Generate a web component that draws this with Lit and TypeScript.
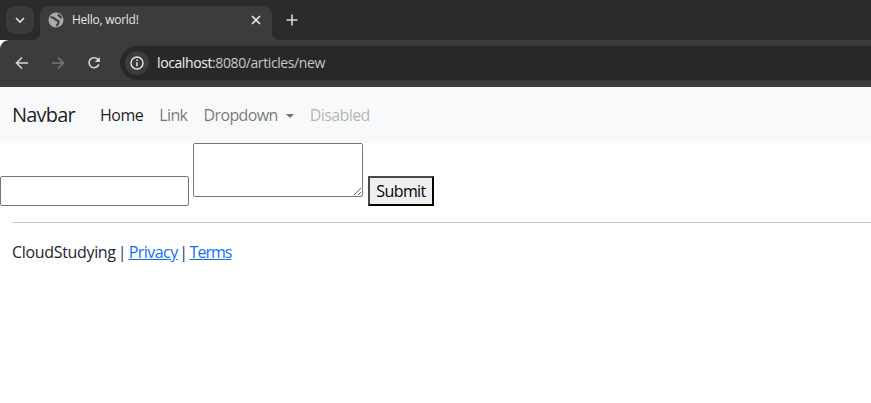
import { LitElement, html, css } from "lit";
import { customElement } from "lit/decorators.js";

@customElement("app-root")
export class AppRoot extends LitElement {
  static styles = css`
    :host { display: block; width: 871px; height: 403px; overflow: hidden; background: #fff; color: #212529;
      font-family: "Open Sans", "Noto Sans", sans-serif; font-size: 16px; line-height: 24px; }
    * { box-sizing: border-box; }
    svg { display: block; }
    .tabs { height: 40px; background: #2b2b2b; display: flex; align-items: flex-end; position: relative; }
    .tab-list { width: 28px; height: 28px; margin: 0 6px 6px 6px; border-radius: 9px; background: #3a3a3a; display: flex; align-items: center; justify-content: center; }
    .tab { width: 232px; height: 34px; background: #3c3c3c; border-radius: 9px 9px 0 0; display: flex; align-items: center; padding: 0 11px 6px 8px; color: #e6e6e6; font-size: 12px; position: relative; }
    .tab::before, .tab::after { content: ""; position: absolute; bottom: 0; width: 8px; height: 8px; }
    .tab::before { left: -8px; background: radial-gradient(circle at 0 0, #2b2b2b 8px, #3c3c3c 8.5px); }
    .tab::after { right: -8px; background: radial-gradient(circle at 100% 0, #2b2b2b 8px, #3c3c3c 8.5px); }
    .tab .title { flex: 1; margin-left: 8px; letter-spacing: -0.27px; }
    .plus { margin-left: 6px; margin-bottom: 6px; width: 28px; height: 28px; display: flex; align-items: center; justify-content: center; }
    .toolbar { height: 47px; background: #3c3c3c; border-radius: 9px 0 0 0; display: flex; align-items: center; padding: 0 0 1px 0; }
    .nav-btn { width: 20px; height: 20px; margin-left: 12px; margin-right: 4px; display: flex; align-items: center; justify-content: center; }
    .nav-btn + .nav-btn { margin-left: 12px; }
    .omni { margin-left: 12px; flex: 1; height: 34px; background: #282828; border-radius: 17px 0 0 17px; display: flex; align-items: center; padding-left: 5px; font-size: 14px; color: #c7c7c7; letter-spacing: -0.4px; }
    .info { width: 24px; height: 24px; border-radius: 50%; background: #3c3c3c; display: flex; align-items: center; justify-content: center; margin-right: 8px; }
    .host { color: #f0f0f0; }
    .navbar { height: 56px; background: #f8f9fa; display: flex; align-items: center; padding: 0 12px; }
    .brand { font-size: 20px; color: rgba(0,0,0,.9); margin-right: 16px; width: 64px; white-space: nowrap; letter-spacing: -0.8px; }
    .nav-link { padding: 0 8px; color: rgba(0,0,0,.55); white-space: nowrap; letter-spacing: -0.6px; }
    .nav-link.active { color: rgba(0,0,0,.9); letter-spacing: -0.5px; }
    .nav-link.disabled { color: rgba(0,0,0,.3); letter-spacing: -0.6px; }
    .caret { display: inline-block; margin-left: 8px; vertical-align: 3px; border-top: 4.8px solid; border-right: 4.8px solid transparent; border-left: 4.8px solid transparent; }
    form { display: flex; align-items: flex-end; height: 63px; }
    input { width: 189px; height: 30px; margin: 0; padding: 1px 2px; border: 1px solid #767676; border-radius: 2px; background: #fff; font: inherit; }
    textarea { width: 170px; height: 54px; margin: 0 5px 9px 4px; padding: 2px; border: 1px solid #767676; border-radius: 2px; background: #fff; font: inherit; }
    button { width: 66px; height: 30px; margin: 0; padding: 0; border: 2px solid; border-color: #4a4a4a #000 #000 #4a4a4a; border-radius: 0; background: #efefef; color: #000; font: inherit; line-height: 26px; letter-spacing: -0.6px; }
    .foot { padding-left: 12px; margin-top: 16px; }
    hr { margin: 0 0 17px; border: 0; height: 1px; background: #c7c8c9; }
    p { margin: 0; white-space: nowrap; display: flex; }
    .name { letter-spacing: -0.33px; }
    .sep { width: 13px; text-align: center; color: #24405f; }
    .sep.second { width: 12px; }
    a { color: #0d6efd; text-decoration: underline; letter-spacing: -0.55px; }
    a.terms { letter-spacing: -1px; }
  `;

  render() {
    return html`
      <div class="tabs">
        <div class="tab-list">
          <svg width="12" height="12" viewBox="0 0 12 12"><path d="M2 4l4 4 4-4" fill="none" stroke="#e3e3e3" stroke-width="1.6"/></svg>
        </div>
        <div class="tab">
          <svg width="16" height="16" viewBox="0 0 16 16"><circle cx="8" cy="8" r="7.5" fill="#a8abaf"/><path d="M2.5 5.5C6 4 6.5 8 9.5 8.5 11.5 9 10.5 11.5 8.5 14" fill="none" stroke="#3c3c3c" stroke-width="2.2"/><path d="M10 2.5L13.5 6" fill="none" stroke="#3c3c3c" stroke-width="2.2"/></svg>
          <span class="title">Hello, world!</span>
          <svg width="10" height="10" viewBox="0 0 10 10"><path d="M1 1l8 8M9 1l-8 8" stroke="#e6e6e6" stroke-width="1.6"/></svg>
        </div>
        <div class="plus">
          <svg width="12" height="12" viewBox="0 0 12 12"><path d="M6 0.5v11M0.5 6h11" stroke="#d8d8d8" stroke-width="1.6"/></svg>
        </div>
      </div>
      <div class="toolbar">
        <div class="nav-btn"><svg width="14" height="14" viewBox="0 0 14 14"><path d="M13 7H2M7 1.5L1.5 7 7 12.5" fill="none" stroke="#d6d6d6" stroke-width="1.6"/></svg></div>
        <div class="nav-btn"><svg width="14" height="14" viewBox="0 0 14 14"><path d="M1 7h11M7 1.5L12.5 7 7 12.5" fill="none" stroke="#777" stroke-width="1.6"/></svg></div>
        <div class="nav-btn"><svg width="14" height="14" viewBox="0 0 14 14"><path d="M11.8 8.2A5 5 0 1 1 10.8 3.4L12.5 5" fill="none" stroke="#d6d6d6" stroke-width="1.6"/><path d="M12.8 1v5h-5z" fill="#d6d6d6"/></svg></div>
        <div class="omni">
          <div class="info"><svg width="14" height="14" viewBox="0 0 14 14"><circle cx="7" cy="7" r="6" fill="none" stroke="#e6e6e6" stroke-width="1.4"/><path d="M7 6.2v4M7 3.6v1.5" stroke="#e6e6e6" stroke-width="1.5"/></svg></div>
          <span><span class="host">localhost</span>:8080/articles/new</span>
        </div>
      </div>
      <div class="navbar">
        <span class="brand">Navbar</span>
        <span class="nav-link active">Home</span>
        <span class="nav-link">Link</span>
        <span class="nav-link">Dropdown<span class="caret"></span></span>
        <span class="nav-link disabled">Disabled</span>
      </div>
      <form @submit=${(e: Event) => e.preventDefault()}>
        <input type="text" />
        <textarea></textarea>
        <button type="submit">Submit</button>
      </form>
      <div class="foot">
        <hr />
        <p><span class="name">CloudStudying</span><span class="sep">|</span><a href="#">Privacy</a><span class="sep second">|</span><a class="terms" href="#">Terms</a></p>
      </div>
    `;
  }
}
